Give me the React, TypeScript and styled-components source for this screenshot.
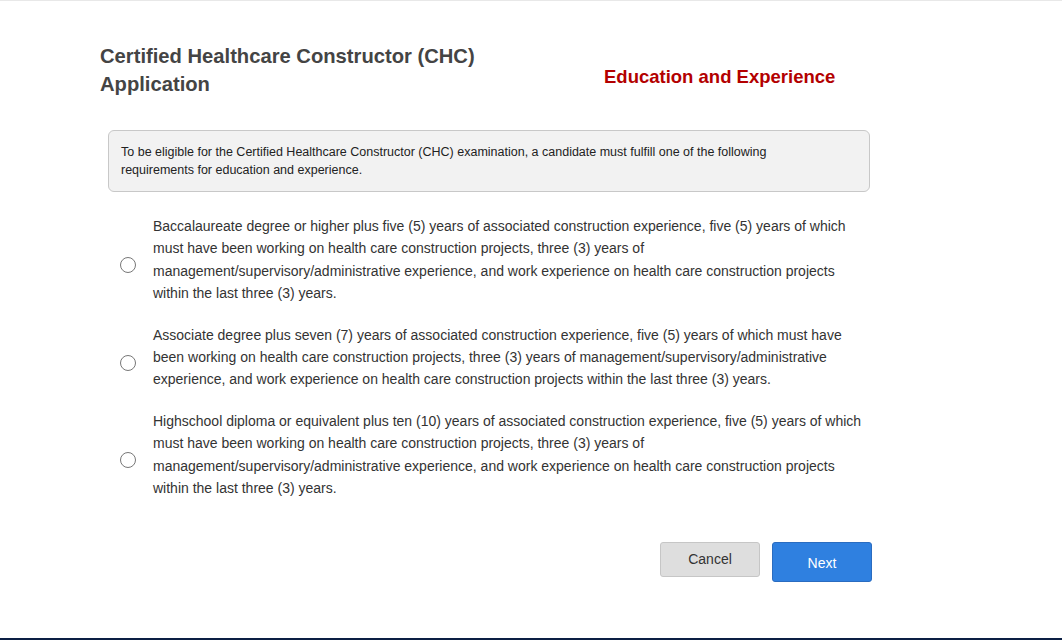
import styled, { createGlobalStyle } from 'styled-components';

const GlobalStyle = createGlobalStyle`
	html, body {
		margin: 0;
		padding: 0;
		background: #fff;
		font-family: "Liberation Sans", Arial, sans-serif;
	}
	* { box-sizing: border-box; }
`;

const Page = styled.div`
	height: 640px;
	border-top: 1px solid #e8e8e8;
	border-bottom: 2px solid #0c1f44;
	overflow: hidden;
`;

const Wrapper = styled.div`
	width: 772px;
	margin-left: 100px;
	padding-top: 41px;
`;

const Header = styled.header`
	display: flex;
	align-items: flex-start;
`;

const Title = styled.h1`
	width: 400px;
	margin: 0;
	font-size: 20.2px;
	line-height: 28px;
	font-weight: bold;
	color: #444;
`;

const Section = styled.h2`
	flex: 1;
	margin: 0;
	padding-top: 23px;
	padding-left: 104px;
	font-size: 18.5px;
	line-height: 24px;
	font-weight: bold;
	color: #b30000;
`;

const InfoBox = styled.div`
	margin: 32px 0 0 8px;
	width: 762px;
	padding: 12px 70px 12px 12px;
	background: #f2f2f2;
	border: 1px solid #c8c8c8;
	border-radius: 6px;
	font-size: 12.5px;
	line-height: 18px;
	color: #222;
`;

const Options = styled.div`
	display: flex;
	flex-direction: column;
	gap: 19px;
	margin-top: 23px;
`;

const Option = styled.label`
	display: flex;
	align-items: center;
	cursor: pointer;
`;

const Radio = styled.input.attrs({ type: 'radio', name: 'req' })`
	appearance: none;
	flex: none;
	width: 16px;
	height: 16px;
	margin: 11px 17px 0 20px;
	border: 1px solid #777;
	border-radius: 50%;
	background: #fff;
	&:checked {
		box-shadow: inset 0 0 0 3px #fff;
		background: #2f80e0;
		border-color: #2f80e0;
	}
`;

const OptionText = styled.span`
	width: 718px;
	font-size: 14px;
	line-height: 22.4px;
	color: #333;
`;

const Actions = styled.div`
	display: flex;
	justify-content: flex-end;
	align-items: flex-start;
	gap: 12px;
	margin-top: 43px;
`;

const Button = styled.button<{ $primary?: boolean }>`
	width: 100px;
	height: ${p => (p.$primary ? '40px' : '35px')};
	font-family: "Liberation Sans", Arial, sans-serif;
	font-size: 14px;
	border-radius: 3px;
	cursor: pointer;
	border: 1px solid ${p => (p.$primary ? '#2a6cc0' : '#c6c6c6')};
	background: ${p => (p.$primary ? '#2f80e0' : '#dedede')};
	color: ${p => (p.$primary ? '#fff' : '#333')};
	padding: ${p => (p.$primary ? '1px 0 0' : '0 0 2px')};
`;

const options = [
	'Baccalaureate degree or higher plus five (5) years of associated construction experience, five (5) years of which must have been working on health care construction projects, three (3) years of management/supervisory/administrative experience, and work experience on health care construction projects within the last three (3) years.',
	'Associate degree plus seven (7) years of associated construction experience, five (5) years of which must have been working on health care construction projects, three (3) years of management/supervisory/administrative experience, and work experience on health care construction projects within the last three (3) years.',
	'Highschool diploma or equivalent plus ten (10) years of associated construction experience, five (5) years of which must have been working on health care construction projects, three (3) years of management/supervisory/administrative experience, and work experience on health care construction projects within the last three (3) years.',
];

export default function App() {
	return (
		<>
			<GlobalStyle />
			<Page>
				<Wrapper>
					<Header>
						<Title>Certified Healthcare Constructor (CHC) Application</Title>
						<Section>Education and Experience</Section>
					</Header>
					<InfoBox>
						To be eligible for the Certified Healthcare Constructor (CHC) examination, a candidate must fulfill one of the following
						requirements for education and experience.
					</InfoBox>
					<Options>
						{options.map((text, i) => (
							<Option key={i}>
								<Radio value={i} />
								<OptionText>{text}</OptionText>
							</Option>
						))}
					</Options>
					<Actions>
						<Button>Cancel</Button>
						<Button $primary>Next</Button>
					</Actions>
				</Wrapper>
			</Page>
		</>
	);
}
